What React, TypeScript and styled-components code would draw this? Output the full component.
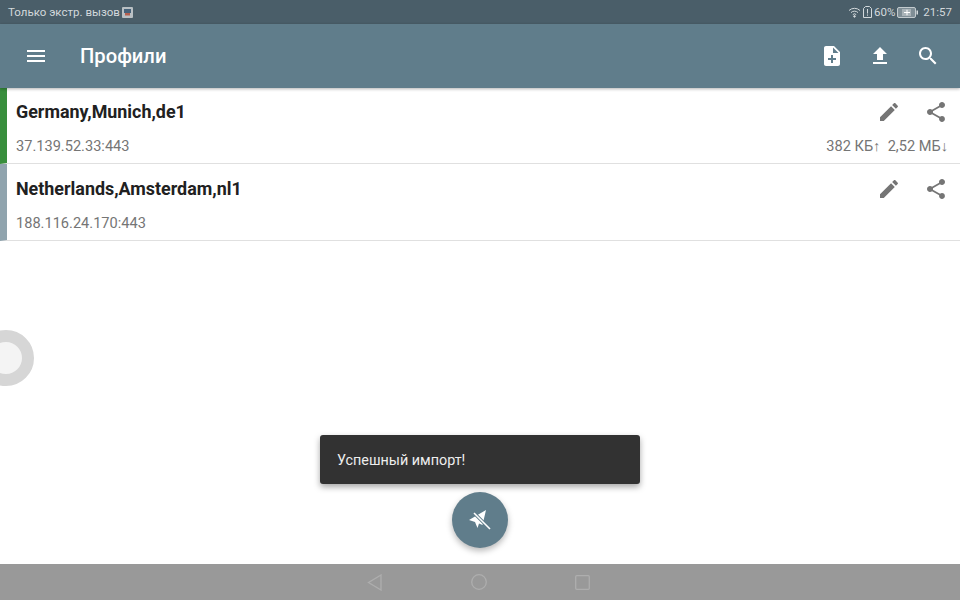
import React from "react";
import styled, {createGlobalStyle} from "styled-components";

const GlobalStyle = createGlobalStyle`
  html, body {
    margin: 0;
    padding: 0;
    background: #fff;
    font-family: Roboto, "Liberation Sans", sans-serif;
  }
`

const Screen = styled.div`
  width: 960px;
  height: 600px;
  display: flex;
  flex-direction: column;
  position: relative;
  overflow: hidden;
`

const StatusBar = styled.div`
  height: 24px;
  flex: none;
  background: #4a5e69;
  color: #d3d9dc;
  font-size: 11.5px;
  display: flex;
  align-items: center;
  justify-content: space-between;
  padding: 0 8px;
`

const StatusGroup = styled.div`
  display: flex;
  align-items: center;
  gap: 2px;
`

const Clock = styled.span`
  margin-left: 3px;
`

const Toolbar = styled.header`
  height: 64px;
  flex: none;
  background: #607d8b;
  color: #fff;
  display: flex;
  align-items: center;
  padding: 0 20px 0 24px;
  box-shadow: 0 1px 3px rgba(0, 0, 0, 0.3);
  position: relative;
  z-index: 1;
`

const ToolbarTitle = styled.h1`
  flex: 1;
  margin: 0 0 0 32px;
  font-size: 20.2px;
  font-weight: 500;
`

const ToolbarActions = styled.div`
  display: flex;
  gap: 24px;
`

const ProfileList = styled.div`
  margin-top: -1px;
`

const Row = styled.div<{ $accent: string }>`
  height: 77px;
  box-sizing: border-box;
  border-left: 7px solid ${(props) => props.$accent};
  border-bottom: 1px solid #e0e0e0;
  padding: 1px 12px 0 9px;
  display: flex;
  flex-direction: column;
`

const RowTop = styled.div`
  height: 48px;
  display: flex;
  align-items: center;
  justify-content: space-between;
`

const RowName = styled.div`
  font-size: 17.9px;
  font-weight: 700;
  color: #212121;
  padding-bottom: 2px;
`

const RowActions = styled.div`
  display: flex;
  gap: 23px;
  color: #757575;
`

const RowBottom = styled.div`
  display: flex;
  justify-content: space-between;
  font-size: 14.6px;
  line-height: 20px;
  color: #757575;
`

const Traffic = styled.span`
  white-space: pre;
`

const Snackbar = styled.div`
  position: absolute;
  left: 320px;
  top: 435px;
  width: 320px;
  height: 49px;
  box-sizing: border-box;
  padding: 1px 17px 0;
  display: flex;
  align-items: center;
  background: #323232;
  border-radius: 3px;
  color: #eee;
  font-size: 14.35px;
  box-shadow: 0 3px 6px rgba(0, 0, 0, 0.35);
`

const Fab = styled.div`
  position: absolute;
  left: 452px;
  top: 492px;
  width: 56px;
  height: 56px;
  border-radius: 50%;
  background: #607d8b;
  display: flex;
  align-items: center;
  justify-content: center;
  box-shadow: 0 3px 6px rgba(0, 0, 0, 0.28);
`

const FloatingDot = styled.div`
  position: absolute;
  left: -22px;
  top: 330px;
  width: 56px;
  height: 56px;
  box-sizing: border-box;
  border-radius: 50%;
  border: 12px solid #d6d6d6;
  background: #f4f4f4;
`

const NavBar = styled.nav`
  position: absolute;
  left: 0;
  right: 0;
  bottom: 0;
  height: 36px;
  background: #999;
  display: flex;
  align-items: center;
  justify-content: center;
  gap: 88px;
  padding-right: 3px;
  box-sizing: border-box;
`

function Icon({d, size = 24}: { d: string, size?: number }) {
    return <svg width={size} height={size} viewBox="0 0 24 24" fill="currentColor"><path d={d}/></svg>
}

const icons = {
    menu: "M3 18h18v-2H3v2zm0-5h18v-2H3v2zm0-7v2h18V6H3z",
    note: "M14 2H6c-1.1 0-1.99.9-1.99 2L4 20c0 1.1.89 2 1.99 2H18c1.1 0 2-.9 2-2V8l-6-6zm2 14h-3v3h-2v-3H8v-2h3v-3h2v3h3v2zm-3-7V3.5L18.5 9H13z",
    upload: "M9 16h6v-6h4l-7-7-7 7h4zm-4 2h14v2H5z",
    search: "M15.5 14h-.79l-.28-.27C15.41 12.59 16 11.11 16 9.5 16 5.91 13.09 3 9.5 3S3 5.91 3 9.5 5.91 16 9.5 16c1.61 0 3.09-.59 4.23-1.57l.27.28v.79l5 4.99L20.49 19l-4.99-5zm-6 0C7.01 14 5 11.99 5 9.5S7.01 5 9.5 5 14 7.01 14 9.5 11.99 14 9.5 14z",
    edit: "M3 17.25V21h3.75L17.81 9.94l-3.75-3.75L3 17.25zM20.71 7.04c.39-.39.39-1.02 0-1.41l-2.34-2.34c-.39-.39-1.02-.39-1.41 0l-1.83 1.83 3.75 3.75 1.83-1.83z",
    share: "M18 16.08c-.76 0-1.44.3-1.96.77L8.91 12.7c.05-.23.09-.46.09-.7s-.04-.47-.09-.7l7.05-4.11c.54.5 1.25.81 2.04.81 1.66 0 3-1.34 3-3s-1.34-3-3-3-3 1.34-3 3c0 .24.04.47.09.7L8.04 9.81C7.5 9.31 6.79 9 6 9c-1.66 0-3 1.34-3 3s1.34 3 3 3c.79 0 1.5-.31 2.04-.81l7.12 4.16c-.05.21-.08.43-.08.65 0 1.61 1.31 2.92 2.92 2.92 1.61 0 2.92-1.31 2.92-2.92s-1.31-2.92-2.92-2.92z",
}

const profiles = [
    {name: "Germany,Munich,de1", address: "37.139.52.33:443", accent: "#388e3c", traffic: "382 КБ↑  2,52 МБ↓"},
    {name: "Netherlands,Amsterdam,nl1", address: "188.116.24.170:443", accent: "#90a4ae", traffic: ""},
]

export default function App() {
    return (
        <Screen>
            <GlobalStyle/>
            <StatusBar>
                <StatusGroup>
                    Только экстр. вызов
                    <svg width="11" height="11" viewBox="0 0 11 11">
                        <rect width="11" height="11" rx="1" fill="#b9c0c4"/>
                        <rect x="2" y="2" width="7" height="4" fill="#46627a"/>
                        <path d="M3 6h5v2.5H3z" fill="#b5604f"/>
                    </svg>
                </StatusGroup>
                <StatusGroup>
                    <svg width="13" height="11" viewBox="0 0 13 11" fill="none" stroke="#d3d9dc" strokeWidth="1">
                        <path d="M1 3.500a8 8 0 0 1 11 0M3 5.600a5 5 0 0 1 7 0M4.800 7.600a2.400 2.400 0 0 1 3.400 0"/>
                        <circle cx="6.500" cy="9.400" r=".8" fill="#d3d9dc"/>
                    </svg>
                    <svg width="9" height="12" viewBox="0 0 9 12" fill="none" stroke="#d3d9dc" strokeWidth="1">
                        <path d="M2.500.5h4l2 2v9h-8v-9z"/>
                        <path d="M4.500 3v4.500M4.500 8.500v1.200"/>
                    </svg>
                    60%
                    <svg width="21" height="11" viewBox="0 0 21 11">
                        <rect x=".5" y=".5" width="18" height="10" rx="1.500" fill="#7f8e96" stroke="#c3cbcf"/>
                        <rect x="5" y="2" width="9" height="7" fill="#a9b3b8"/>
                        <rect x="19.500" y="3.500" width="1.500" height="4" fill="#d3d9dc"/>
                        <path d="M7 5h2.500V2.800h1V5H13v1h-2.500v2.200h-1V6H7z" fill="#fff"/>
                    </svg>
                    <Clock>21:57</Clock>
                </StatusGroup>
            </StatusBar>
            <Toolbar>
                <Icon d={icons.menu}/>
                <ToolbarTitle>Профили</ToolbarTitle>
                <ToolbarActions>
                    <Icon d={icons.note}/>
                    <Icon d={icons.upload}/>
                    <Icon d={icons.search}/>
                </ToolbarActions>
            </Toolbar>
            <ProfileList>
                {profiles.map((profile) => (
                    <Row key={profile.name} $accent={profile.accent}>
                        <RowTop>
                            <RowName>{profile.name}</RowName>
                            <RowActions>
                                <Icon d={icons.edit}/>
                                <Icon d={icons.share}/>
                            </RowActions>
                        </RowTop>
                        <RowBottom>
                            <span>{profile.address}</span>
                            <Traffic>{profile.traffic}</Traffic>
                        </RowBottom>
                    </Row>
                ))}
            </ProfileList>
            <FloatingDot/>
            <Snackbar>Успешный импорт!</Snackbar>
            <Fab>
                <svg width="24" height="24" viewBox="0 0 24 24">
                    <path d="M18 2 L1 12 L7 14 L9.500 20 L11 15.500 L14.500 17 Z" fill="#fff"/>
                    <path d="M5 4 L22.500 21.500" stroke="#607d8b" strokeWidth="3.200"/>
                    <path d="M6 5 L22 21" stroke="#fff" strokeWidth="1.600"/>
                </svg>
            </Fab>
            <NavBar>
                <svg width="16" height="17" viewBox="0 0 16 17" fill="none" stroke="#aeaeae" strokeWidth="1.300">
                    <path d="M14 1 L1.500 8.500 L14 16 Z"/>
                </svg>
                <svg width="16" height="16" viewBox="0 0 16 16" fill="none" stroke="#aeaeae" strokeWidth="1.300">
                    <circle cx="8" cy="8" r="7.300"/>
                </svg>
                <svg width="15" height="15" viewBox="0 0 15 15" fill="none" stroke="#aeaeae" strokeWidth="1.300">
                    <rect x=".7" y=".7" width="13.600" height="13.600" rx="1"/>
                </svg>
            </NavBar>
        </Screen>
    )
}
